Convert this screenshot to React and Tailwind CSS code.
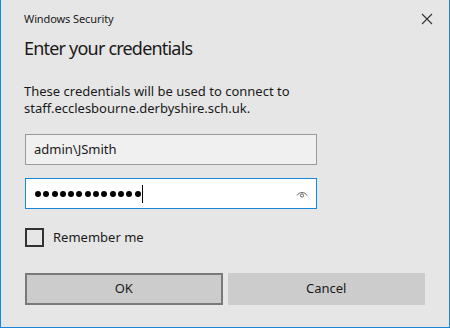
import React from 'react';

const EyeIcon = () => (
    <svg width="12" height="10" viewBox="0 0 12 10" fill="none" stroke="#666" strokeWidth="1">
        <path d="M1 6.5 C3 2.5, 9 2.5, 11 6.5" />
        <circle cx="6" cy="6.5" r="1.6" />
    </svg>
);

const dots = Array.from({ length: 13 });

const App = () => {
    return (
        <div className="w-[450px] h-[328px] bg-[#e6e6e6] border-x border-b border-[#1a86d8] flex flex-col" style={{ fontFamily: '"Noto Sans", "Open Sans", sans-serif' }}>
            {/* Title bar */}
            <div className="flex items-center justify-between pl-[23px] pr-[16px] pt-[8px] h-[30px]">
                <span className="text-[11px] tracking-[-0.1px] text-[#1a1a1a]">Windows Security</span>
                <svg width="12" height="12" viewBox="0 0 12 12" stroke="#333" strokeWidth="1.1">
                    <path d="M1 1 L11 11 M11 1 L1 11" />
                </svg>
            </div>

            <div className="pl-[23px] pr-[24px]">
                <h1 className="text-[18px] tracking-[-0.8px] text-[#1a1a1a] leading-[26px] mt-[5px]">Enter your credentials</h1>

                <p className="text-[13px] text-[#1a1a1a] leading-[17px] mt-[22px]">
                    These credentials will be used to connect to<br />
                    staff.ecclesbourne.derbyshire.sch.uk.
                </p>

                {/* Inputs */}
                <div className="mt-[17px] flex flex-col gap-[13px] w-[292px] ml-[1px]">
                    <div className="h-[31px] border border-[#9a9a9a] bg-[#f0f0f0] flex items-center px-[8px] text-[13px] text-[#1a1a1a]">
                        admin\JSmith
                    </div>
                    <div className="h-[31px] border border-[#1a86d8] bg-white flex items-center pl-[9px] pr-[8px] justify-between">
                        <div className="flex items-center">
                            <div className="flex items-center gap-[2.3px]">
                                {dots.map((_, i) => (
                                    <span key={i} className="w-[6px] h-[6px] rounded-full bg-black" />
                                ))}
                            </div>
                            <span className="w-px h-[18px] bg-black ml-[1px]" />
                        </div>
                        <EyeIcon />
                    </div>
                </div>

                {/* Remember me */}
                <div className="mt-[19px] ml-[1px] flex items-center gap-[9px]">
                    <div className="w-[19px] h-[19px] border-2 border-[#333]" />
                    <span className="text-[13px] text-[#1a1a1a]">Remember me</span>
                </div>

                {/* Buttons */}
                <div className="mt-[25px] ml-[1px] flex gap-[5px]">
                    <button className="w-[198px] h-[32px] bg-[#cccccc] border-2 border-[#7a7a7a] text-[13px] text-[#1a1a1a]">OK</button>
                    <button className="w-[198px] h-[32px] bg-[#cccccc] text-[13px] text-[#1a1a1a]">Cancel</button>
                </div>
            </div>
        </div>
    );
};

export default App;
